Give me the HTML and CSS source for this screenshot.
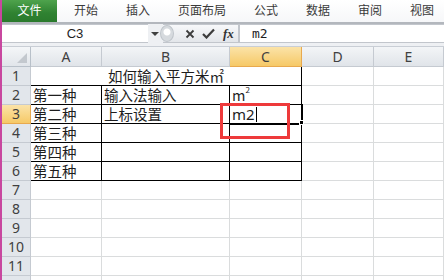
FILE: index.html
```html
<!DOCTYPE html>
<html lang="zh-CN">
<head>
    <meta charset="UTF-8">
    <title>如何输入平方米</title>
    <link rel="stylesheet" href="styles.css">
</head>
<body>
    <div class="tabs">
        <span class="tab file">文件</span>
        <span class="tab">开始</span>
        <span class="tab">插入</span>
        <span class="tab">页面布局</span>
        <span class="tab">公式</span>
        <span class="tab">数据</span>
        <span class="tab">审阅</span>
        <span class="tab">视图</span>
    </div>

    <div class="formula">
        <div class="namebox">C3</div>
        <span class="drop"></span>
        <div class="fbuttons">
            <span class="grip"></span>
            <svg class="ico" width="10" height="10" viewBox="0 0 10 10"><path d="M1.5 1.5 L8.5 8.5 M8.5 1.5 L1.5 8.5" stroke="#3c3c3c" stroke-width="1.8" fill="none"/></svg>
            <svg class="ico" width="13" height="11" viewBox="0 0 13 11"><path d="M1 6 L4.5 9.5 L12 1.5" stroke="#3c3c3c" stroke-width="2.2" fill="none"/></svg>
            <span class="fx">fx</span>
        </div>
        <div class="finput">m2</div>
    </div>

    <div class="sheet">
        <div class="grid">
            <div class="corner"><span class="tri"></span></div>
            <div class="colh">A</div>
            <div class="colh">B</div>
            <div class="colh sel">C</div>
            <div class="colh">D</div>
            <div class="colh">E</div>

            <div class="rowh">1</div>
            <div class="cell title">如何输入平方米㎡</div>
            <div class="cell"></div>
            <div class="cell"></div>

            <div class="rowh">2</div>
            <div class="cell bx">第一种</div>
            <div class="cell bx">输入法输入</div>
            <div class="cell bx">m<sup>2</sup></div>
            <div class="cell"></div>
            <div class="cell"></div>

            <div class="rowh sel">3</div>
            <div class="cell bx">第二种</div>
            <div class="cell bx">上标设置</div>
            <div class="cell bx edit">m2<span class="caret"></span></div>
            <div class="cell"></div>
            <div class="cell"></div>

            <div class="rowh">4</div>
            <div class="cell bx">第三种</div>
            <div class="cell bx"></div>
            <div class="cell bx"></div>
            <div class="cell"></div>
            <div class="cell"></div>

            <div class="rowh">5</div>
            <div class="cell bx">第四种</div>
            <div class="cell bx"></div>
            <div class="cell bx"></div>
            <div class="cell"></div>
            <div class="cell"></div>

            <div class="rowh">6</div>
            <div class="cell bx">第五种</div>
            <div class="cell bx"></div>
            <div class="cell bx"></div>
            <div class="cell"></div>
            <div class="cell"></div>

            <div class="rowh">7</div>
            <div class="cell"></div><div class="cell"></div><div class="cell"></div><div class="cell"></div><div class="cell"></div>
            <div class="rowh">8</div>
            <div class="cell"></div><div class="cell"></div><div class="cell"></div><div class="cell"></div><div class="cell"></div>
            <div class="rowh">9</div>
            <div class="cell"></div><div class="cell"></div><div class="cell"></div><div class="cell"></div><div class="cell"></div>
            <div class="rowh">10</div>
            <div class="cell"></div><div class="cell"></div><div class="cell"></div><div class="cell"></div><div class="cell"></div>
            <div class="rowh">11</div>
            <div class="cell"></div><div class="cell"></div><div class="cell"></div><div class="cell"></div><div class="cell"></div>
            <div class="rowh"></div>
            <div class="cell"></div><div class="cell"></div><div class="cell"></div><div class="cell"></div><div class="cell"></div>
        </div>

        <!-- annotation box and fill handle lie over the grid -->
        <div class="mark"></div>
        <div class="handle"></div>
    </div>
</body>
</html>
```

FILE: styles.css
```css
* {
    margin: 0;
    padding: 0;
    box-sizing: border-box;
}

body {
    width: 444px;
    height: 280px;
    overflow: hidden;
    background: #ffffff;
    border-left: 2px solid #c8479f;
    font-family: "Noto Sans CJK SC", "Noto Sans", sans-serif;
    color: #1e1e1e;
}

/* ribbon tabs */
.tabs {
    height: 24px;
    display: flex;
    align-items: flex-start;
    background: linear-gradient(#ffffff, #f6f7f9);
    border-bottom: 2px solid #b3b7bd;
}

.tab {
    flex-shrink: 0;
    white-space: nowrap;
    font-size: 12px;
    line-height: 20px;
    padding: 0 14px;
    color: #3a3a3a;
}

.tab.file {
    width: 55px;
    margin-right: 3px;
    height: 22px;
    padding: 0;
    text-align: center;
    color: #ffffff;
    background: linear-gradient(#4ea34c, #2f8231 60%, #2a7a2c);
}

/* formula bar */
.formula {
    height: 23px;
    display: flex;
    align-items: flex-start;
    background: #eef0f3;
    border-bottom: 1px solid #c9ced5;
}

.namebox {
    width: 146px;
    height: 19px;
    background: #ffffff;
    border-top: 1px solid #c2c6cc;
    border-bottom: 1px solid #c2c6cc;
    font-family: "Liberation Sans", sans-serif;
    font-size: 13px;
    line-height: 17px;
    text-align: center;
}

.drop {
    width: 0;
    height: 0;
    margin: 8px 4px 0 3px;
    border-left: 4px solid transparent;
    border-right: 4px solid transparent;
    border-top: 4px solid #404040;
}

.fbuttons {
    width: 76px;
    height: 19px;
    display: flex;
    align-items: center;
    gap: 7px;
    background: linear-gradient(#f7f8fa, #e3e6ea);
    border: 1px solid #c2c6cc;
    border-left: none;
}

.grip {
    width: 14px;
    height: 17px;
    border-radius: 50%;
    margin-left: -3px;
    margin-right: 4px;
    background: radial-gradient(circle at 50% 40%, #ffffff 0 3px, #d6dade 4px);
    border: 1px solid #bfc4ca;
}

.ico {
    display: block;
}

.fx {
    font-family: "Liberation Serif", serif;
    font-style: italic;
    font-weight: bold;
    font-size: 13px;
    line-height: 17px;
    color: #333333;
    margin-left: 1px;
}

.finput {
    flex: 1;
    height: 19px;
    background: #ffffff;
    border-top: 1px solid #c2c6cc;
    border-bottom: 1px solid #c2c6cc;
    border-left: 1px solid #c2c6cc;
    font-family: "DejaVu Sans Mono", monospace;
    font-size: 13px;
    line-height: 17px;
    padding-left: 12px;
}

/* sheet grid */
.sheet {
    position: relative;
}

.grid {
    display: grid;
    grid-template-columns: 29px 71px 128px 72px 72px 1fr;
    grid-template-rows: 20px;
    grid-auto-rows: 19px;
}

.grid > div {
    border-right: 1px solid #dadcdd;
    border-bottom: 1px solid #dadcdd;
}

.corner {
    position: relative;
    background: linear-gradient(#f4f6f8, #e1e5ea);
    border-right-color: #b8c0c9 !important;
    border-bottom-color: #b8c0c9 !important;
}

.tri {
    position: absolute;
    right: 3px;
    bottom: 3px;
    width: 0;
    height: 0;
    border-left: 10px solid transparent;
    border-bottom: 10px solid #c3c8ce;
}

.colh,
.rowh {
    font-family: "Noto Sans", sans-serif;
    font-size: 14px;
    color: #404040;
    text-align: center;
    background: linear-gradient(#f3f5f7, #e0e4e9);
    border-right-color: #c5cad1 !important;
    border-bottom-color: #c5cad1 !important;
}

.colh {
    line-height: 19px;
}

.rowh {
    line-height: 18px;
    background: #e2e6eb;
}

.colh.sel,
.rowh.sel {
    background: linear-gradient(#fbe3a8, #f6c967);
    border-right-color: #e8a94e !important;
    border-bottom-color: #e8a94e !important;
}

.cell {
    font-size: 14.5px;
    line-height: 18px;
    padding-left: 2px;
    white-space: nowrap;
}

.title {
    grid-column: span 3;
    text-align: center;
    padding-left: 0;
    border-right-color: #000000 !important;
    border-bottom-color: #000000 !important;
}

.bx {
    border-right-color: #000000 !important;
    border-bottom-color: #000000 !important;
}

.cell sup {
    font-size: 8px;
    vertical-align: 8px;
    line-height: 0;
}

.edit {
    font-family: "Noto Sans", sans-serif;
    font-size: 15px;
    outline: 1px solid #000000;
}

.caret {
    display: inline-block;
    width: 1px;
    height: 15px;
    background: #000000;
    vertical-align: -2px;
    margin-left: 1px;
}

.mark {
    position: absolute;
    left: 218px;
    top: 56px;
    width: 70px;
    height: 36px;
    border: 3px solid #ee3a3b;
}

.handle {
    position: absolute;
    left: 297px;
    top: 73px;
    width: 5px;
    height: 5px;
    background: #000000;
    border: 1px solid #ffffff;
}
```
